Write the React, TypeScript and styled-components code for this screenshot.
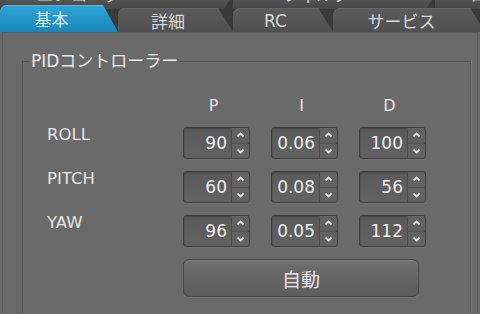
import React from 'react';
import styled, { createGlobalStyle } from 'styled-components';

const FONT = `"DejaVu Sans", "Noto Sans CJK JP", sans-serif`;

const GlobalStyle = createGlobalStyle`
  html, body {
    margin: 0;
    padding: 0;
    background: #6a6a6a;
  }
`;

// Page shell
const Screen = styled.div`
  width: 480px;
  height: 314px;
  overflow: hidden;
  display: flex;
  flex-direction: column;
  background: #6a6a6a;
  font-family: ${FONT};
  color: #e4e4e4;
`;

// Tabs
const TabBar = styled.div`
  height: 32px;
  flex-shrink: 0;
  display: flex;
  flex-direction: column;
  background: #3a3a3a;
  overflow: hidden;
`;

const BackRow = styled.div`
  height: 9px;
  display: flex;
  gap: 3px;
  overflow: hidden;
`;

const BackTab = styled.div<{ $width: number; $offset?: number }>`
  flex-shrink: 0;
  width: ${(p) => p.$width}px;
  margin-left: ${(p) => p.$offset ?? 0}px;
  height: 9px;
  display: flex;
  align-items: flex-end;
  justify-content: center;
  padding-right: 15px;
  box-sizing: border-box;
  background: linear-gradient(#535353, #474747);
  clip-path: polygon(0 0, 100% 0, calc(100% - 6px) 100%, 0 100%);
  font-size: 17px;
  line-height: 1;
  color: #d6d6d6;
  overflow: hidden;

  span {
    transform: translateY(-5px);
    white-space: nowrap;
  }
`;

const FrontRow = styled.div`
  display: flex;
  align-items: flex-end;
  height: 27px;
  margin-top: -4px;
`;

const Tab = styled.div<{ $width: number; $active?: boolean }>`
  flex-shrink: 0;
  width: ${(p) => p.$width}px;
  height: ${(p) => (p.$active ? 27 : 24)}px;
  box-sizing: border-box;
  padding-right: 15px;
  display: flex;
  align-items: center;
  justify-content: center;
  border-top-left-radius: 7px;
  clip-path: polygon(0 0, calc(100% - 15px) 0, 100% 100%, 0 100%);
  background: ${(p) =>
    p.$active
      ? 'linear-gradient(#2ea6d8, #1a86b8)'
      : 'linear-gradient(#5c5c5c, #505050)'};
  box-shadow: inset 0 1px 0 ${(p) => (p.$active ? '#4bb7e3' : '#676767')};
  color: ${(p) => (p.$active ? '#d8ecf6' : '#d8d8d8')};
  font-size: 17px;
  padding-top: ${(p) => (p.$active ? 0 : 1)}px;
`;

// Pane with group box
const Pane = styled.div`
  flex: 1;
  margin: 0 2px 0 2px;
  border-left: 1px solid #5b5b5b;
  border-right: 1px solid #5b5b5b;
  border-top: 1px solid #5e5e5e;
  padding: 28px 6px 0 19px;
  display: flex;
  flex-direction: column;
  min-height: 0;
`;

const GroupBox = styled.div`
  position: relative;
  flex: 1;
  border: 1px solid #575757;
  border-bottom: none;
  box-shadow: 1px 0 0 #747474;
  padding: 34px 0 0 24px;
`;

const GroupTitle = styled.div`
  position: absolute;
  top: -11px;
  left: 6px;
  padding: 0 2px;
  background: #6a6a6a;
  font-size: 17px;
  line-height: 20px;
  color: #e8e8e8;
`;

const PidGrid = styled.div`
  display: grid;
  grid-template-columns: 115px 67px 67px 67px;
  grid-template-rows: 19px 32px 32px 32px 38px;
  column-gap: 21px;
  row-gap: 12px;
`;

const ColHead = styled.div`
  font-size: 16px;
  line-height: 19px;
  text-align: center;
  padding-right: 6px;
`;

const RowLabel = styled.div`
  font-size: 16.5px;
  line-height: 19px;
  margin-top: -2px;
`;

// Spin box
const Spin = styled.div`
  display: flex;
  height: 32px;
  box-sizing: border-box;
  border: 1px solid #3f3f3f;
  border-radius: 3px;
  background: linear-gradient(#5a5a5a, #626262);
  box-shadow: inset 0 1px 2px rgba(0, 0, 0, 0.25), 0 1px 0 #757575;
  overflow: hidden;
`;

const SpinValue = styled.div`
  flex: 1;
  text-align: right;
  padding-right: 4px;
  font-size: 17px;
  line-height: 30px;
  color: #ececec;
`;

const SpinArrows = styled.div`
  width: 17px;
  display: flex;
  flex-direction: column;
  border-left: 1px solid #4c4c4c;
  background: #626262;
`;

const ArrowButton = styled.div<{ $down?: boolean }>`
  flex: 1;
  display: flex;
  align-items: center;
  justify-content: center;
  border-top: ${(p) => (p.$down ? '1px solid #505050' : 'none')};
`;

const Chevron: React.FC<{ down?: boolean }> = ({ down }) => (
  <svg width="9" height="6" viewBox="0 0 9 6">
    <polyline
      points={down ? '1.5,1.5 4.5,4.5 7.5,1.5' : '1.5,4.5 4.5,1.5 7.5,4.5'}
      fill="none"
      stroke="#e0e0e0"
      strokeWidth="1.8"
    />
  </svg>
);

const AutoButton = styled.button`
  grid-column: 2 / 5;
  margin-right: 7px;
  border: 1px solid #464646;
  border-radius: 6px;
  background: linear-gradient(#6f6f6f, #5d5d5d);
  box-shadow: inset 0 1px 0 #7b7b7b, 0 1px 0 #747474;
  font-family: ${FONT};
  font-size: 19px;
  color: #e6e6e6;
  padding: 0;
`;

const rows = [
  { name: 'ROLL', p: '90', i: '0.06', d: '100' },
  { name: 'PITCH', p: '60', i: '0.08', d: '56' },
  { name: 'YAW', p: '96', i: '0.05', d: '112' },
];

const SpinBox: React.FC<{ value: string }> = ({ value }) => (
  <Spin>
    <SpinValue>{value}</SpinValue>
    <SpinArrows>
      <ArrowButton>
        <Chevron />
      </ArrowButton>
      <ArrowButton $down>
        <Chevron down />
      </ArrowButton>
    </SpinArrows>
  </Spin>
);

const App: React.FC = () => {
  return (
    <Screen>
      <GlobalStyle />
      <TabBar>
        <BackRow>
          <BackTab $width={270} $offset={-40}>
            <span>エンコーダー</span>
          </BackTab>
          <BackTab $width={199}>
            <span>フィルター</span>
          </BackTab>
          <BackTab $width={120}>
            <span>ログ</span>
          </BackTab>
        </BackRow>
        <FrontRow>
          <Tab $width={118} $active>
            基本
          </Tab>
          <Tab $width={115}>詳細</Tab>
          <Tab $width={100}>RC</Tab>
          <Tab $width={152}>サービス</Tab>
        </FrontRow>
      </TabBar>

      <Pane>
        <GroupBox>
          <GroupTitle>PIDコントローラー</GroupTitle>
          <PidGrid>
            <div />
            <ColHead>P</ColHead>
            <ColHead>I</ColHead>
            <ColHead>D</ColHead>
            {rows.map((r) => (
              <React.Fragment key={r.name}>
                <RowLabel>{r.name}</RowLabel>
                <SpinBox value={r.p} />
                <SpinBox value={r.i} />
                <SpinBox value={r.d} />
              </React.Fragment>
            ))}
            <AutoButton>自動</AutoButton>
          </PidGrid>
        </GroupBox>
      </Pane>
    </Screen>
  );
};

export default App;
